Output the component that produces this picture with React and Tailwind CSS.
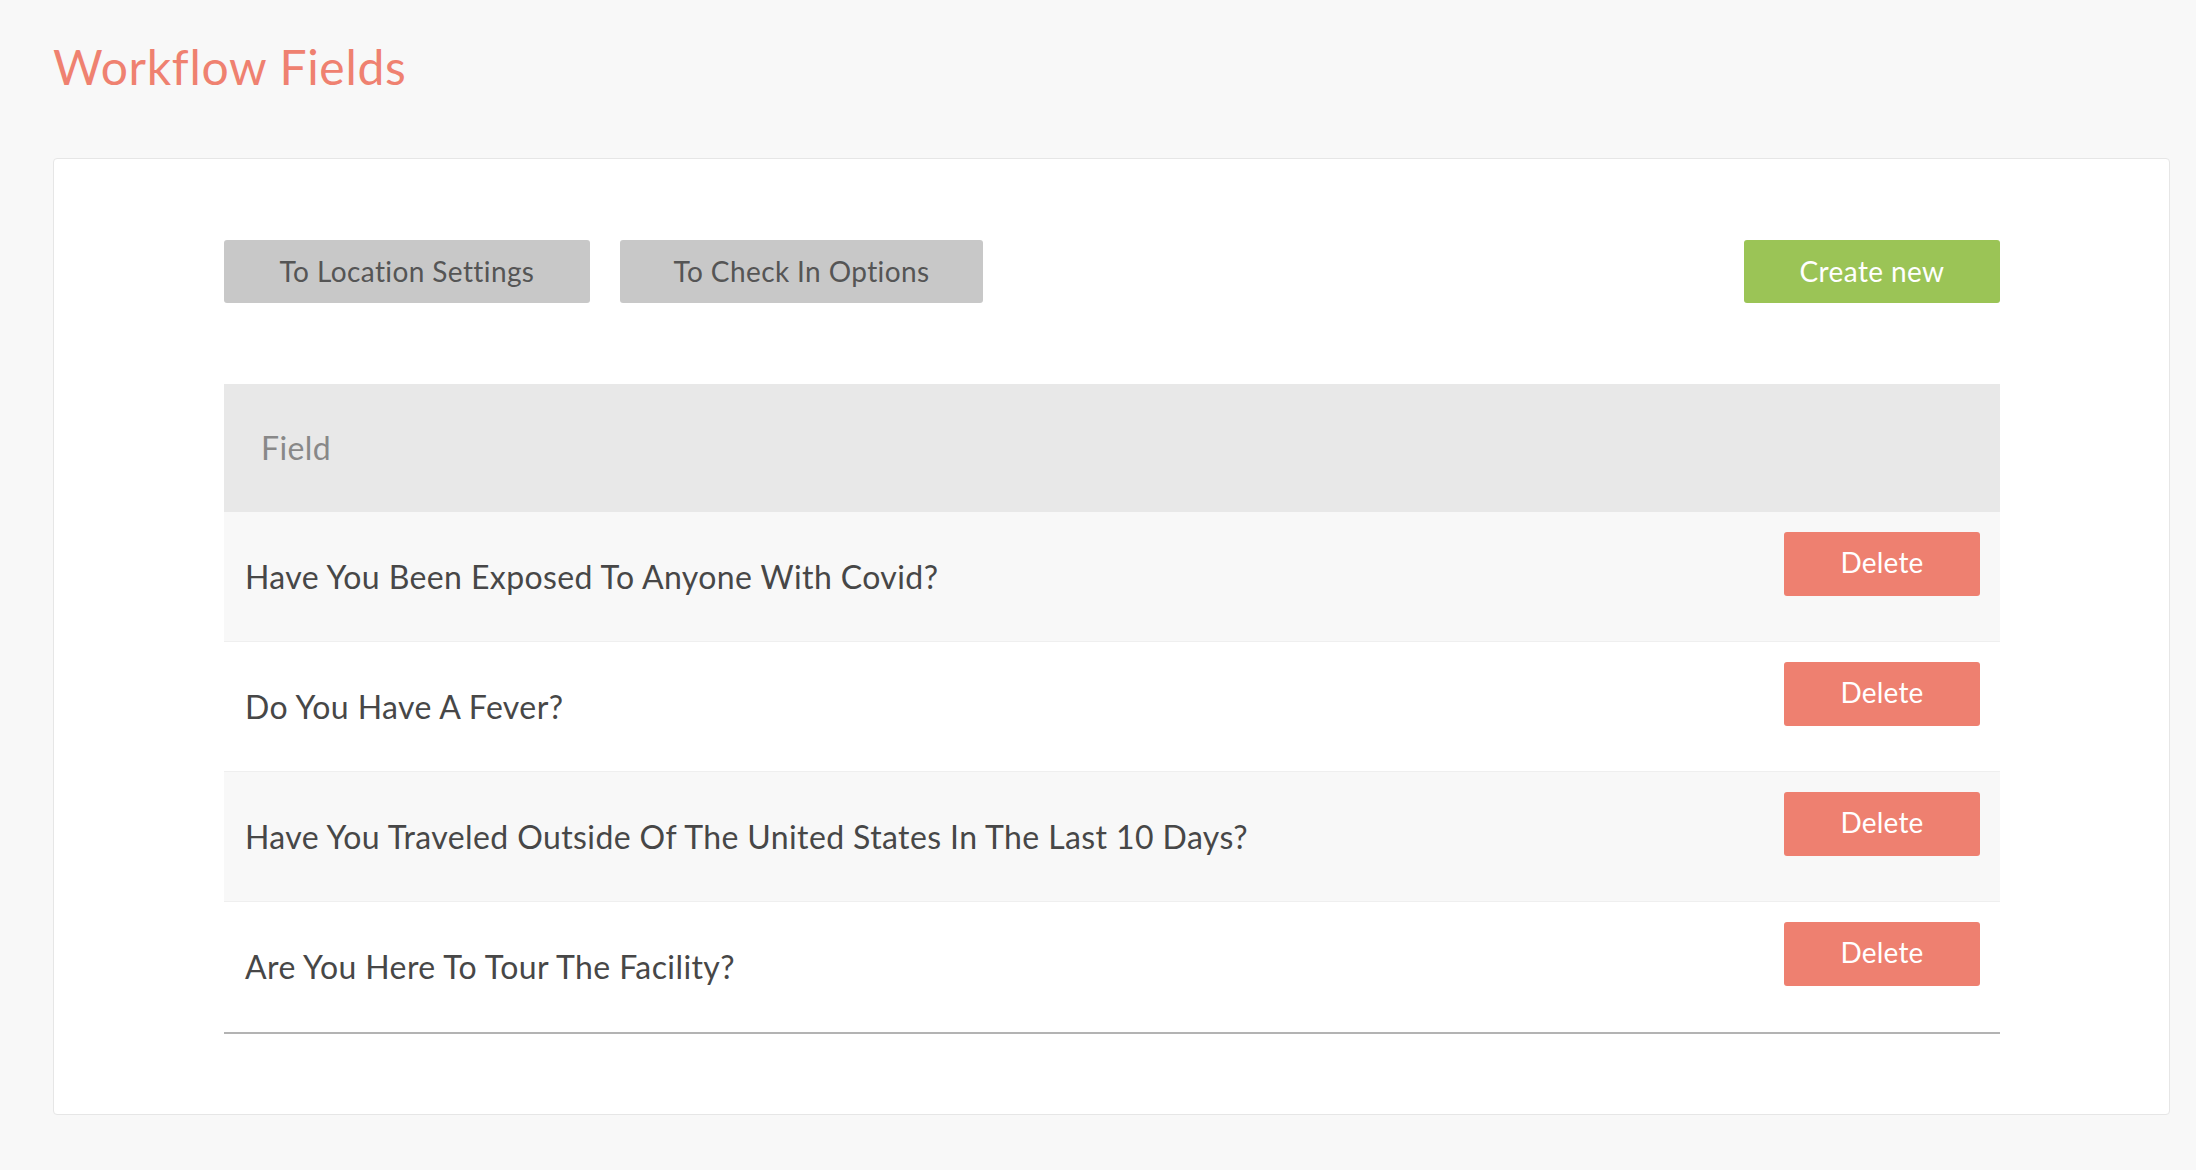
const fields = [
  "Have You Been Exposed To Anyone With Covid?",
  "Do You Have A Fever?",
  "Have You Traveled Outside Of The United States In The Last 10 Days?",
  "Are You Here To Tour The Facility?",
];

export default function App() {
  return (
    <div className="min-h-screen bg-[#f8f8f8] pt-[43px] pb-[56px] pl-[53px] pr-[26px] font-['Lato',sans-serif]">
      <h1 className="text-[48px] leading-none font-normal tracking-[0.7px] text-[#ef8170]">Workflow Fields</h1>

      <div className="mt-[67px] bg-white border border-[#e6e6e6] rounded-[4px] pt-[81px] pb-[80px] pl-[170px] pr-[169px]">
        {/* action buttons */}
        <div className="flex items-center justify-between">
          <div className="flex gap-[30px]">
            <button className="w-[366px] h-[63px] pb-[2px] rounded-[3px] bg-[#c8c8c8] text-[#555] text-[28px] tracking-[0.4px]">
              To Location Settings
            </button>
            <button className="w-[363px] h-[63px] pb-[2px] rounded-[3px] bg-[#c8c8c8] text-[#555] text-[28px] tracking-[0.4px]">
              To Check In Options
            </button>
          </div>
          <button className="w-[256px] h-[63px] pb-[2px] rounded-[3px] bg-[#9bc456] text-white text-[28px] tracking-[0.4px]">
            Create new
          </button>
        </div>

        {/* table */}
        <div className="mt-[81px] border-b-2 border-[#b3b3b3]">
          <div className="h-[128px] bg-[#e8e8e8] flex items-center pl-[37px] text-[32px] tracking-[0.4px] text-[#888]">
            Field
          </div>
          {fields.map((f, i) => (
            <div
              key={f}
              className={
                "flex h-[130px] " +
                (i % 2 === 0 ? "bg-[#f8f8f8] " : "bg-white ") +
                (i < fields.length - 1 ? "border-b border-[#efefef]" : "")
              }
            >
              <div className="flex-1 flex items-center pl-[21px] text-[32px] tracking-[0.4px] text-[#474747]">{f}</div>
              <div className="pt-[20px] pr-[20px]">
                <button className="w-[196px] h-[64px] pb-[4px] rounded-[3px] bg-[#ee8070] text-white text-[28px] tracking-[0.2px]">
                  Delete
                </button>
              </div>
            </div>
          ))}
        </div>
      </div>
    </div>
  );
}
